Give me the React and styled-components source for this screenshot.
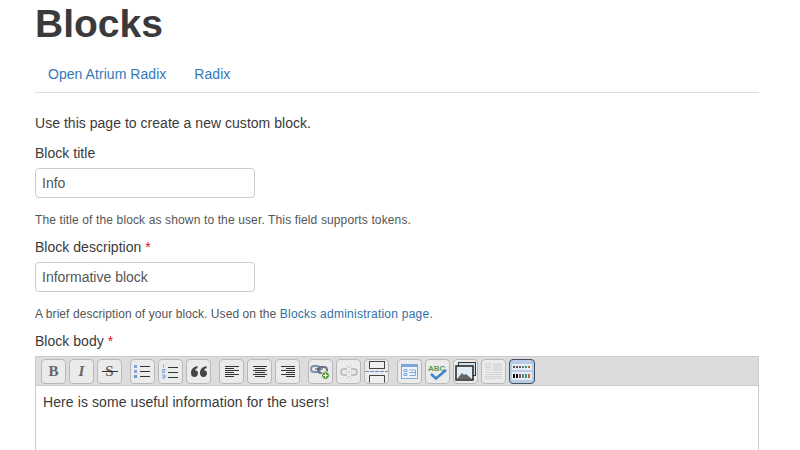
import React from 'react';
import styled, { createGlobalStyle } from 'styled-components';

const GlobalStyle = createGlobalStyle`
  html, body { margin: 0; padding: 0; height: 450px; overflow: hidden; background: #fff; }
  body { font-family: "Liberation Sans", Arial, sans-serif; font-size: 14px; color: #3a3a3a; }
`;

const Page = styled.div`
  width: 724px;
  margin-left: 35px;
  height: 450px;
  overflow: hidden;
`;

const Title = styled.h1`
  margin: 0;
  padding-top: 2px;
  font-size: 39px;
  line-height: 43px;
  font-weight: 700;
  color: #3a3a3a;
`;

const Tabs = styled.nav`
  display: flex;
  gap: 28px;
  margin-top: 7px;
  padding: 4px 13px 0;
  height: 36px;
  align-items: center;
  border-bottom: 1px solid #ddd;
  letter-spacing: 0.05px;
`;

const Link = styled.a`
  color: #337ab7;
  text-decoration: none;
`;

const HelpLink = styled(Link)`
  color: #2f6fa8;
  letter-spacing: 0.24px;
`;

const Intro = styled.p`
  margin: 0;
  padding-top: 22px;
  line-height: 16px;
  letter-spacing: 0.03px;
`;

const Field = styled.div`
  display: flex;
  flex-direction: column;
  align-items: flex-start;
`;

const Label = styled.label`
  line-height: 16px;
  margin-top: ${p => p.$top}px;
  letter-spacing: 0.03px;
`;

const Required = styled.span`
  color: #e0112b;
`;

const TextInput = styled.div`
  box-sizing: border-box;
  width: 220px;
  height: 30px;
  margin-top: 7px;
  padding: 0 6px;
  line-height: 28px;
  color: #555;
  border: 1px solid #ccc;
  border-radius: 4px;
`;

const Help = styled.div`
  margin-top: 14px;
  font-size: 12px;
  line-height: 16px;
  color: #555;
  letter-spacing: ${p => p.$spacing}px;
`;

const Editor = styled.div`
  margin-top: 7px;
  border: 1px solid #ccc;
  border-bottom: 0;
`;

const Toolbar = styled.div`
  display: flex;
  gap: 8px;
  height: 27px;
  padding: 1px 0 0 5px;
  align-items: center;
  background: #dcdcdc;
  border-bottom: 1px solid #ccc;
`;

const Group = styled.div`
  display: flex;
  gap: 3px;
`;

const Button = styled.div`
  box-sizing: border-box;
  width: ${p => (p.$active ? 26 : 25)}px;
  height: 25px;
  display: flex;
  align-items: center;
  justify-content: center;
  border-radius: 4px;
  border: 1px solid ${p => (p.$active ? '#474e5e' : '#b8b8b8')};
  background: ${p => (p.$active ? '#b9cbe6' : '#ebebeb')};
`;

const Glyph = styled.span`
  position: relative;
  font-family: "Liberation Serif", serif;
  font-weight: 700;
  font-size: 15px;
  line-height: 1;
  color: #666;
  font-style: ${p => (p.$italic ? 'italic' : 'normal')};
`;

const Strike = styled.span`
  position: absolute;
  left: -3px;
  right: -4px;
  top: 7px;
  height: 1px;
  background: #333;
`;

const Body = styled.div`
  height: 66px;
  padding: 8px 7px;
  line-height: 17px;
  letter-spacing: 0.09px;
`;

const Icon = ({ children, w = 18, h = 18 }) => (
  <svg width={w} height={h} viewBox={`0 0 ${w} ${h}`}>{children}</svg>
);

const Lines = ({ rows }) => (
  <Icon w={14} h={13}>
    {rows.map(([x, len], i) => (
      <rect key={i} x={x} y={i * 2 + 1} width={len} height="1" fill="#333" />
    ))}
  </Icon>
);

const BulletList = () => (
  <Icon w={17} h={15}>
    <rect x="0" y="1" width="3" height="3" fill="#7fa6dc" />
    <rect x="0" y="6" width="3" height="3" fill="#7fa6dc" />
    <rect x="0" y="11" width="3" height="3" fill="#6f98d6" />
    <path d="M6 2.500h10M6 7.500h10M6 12.500h10" stroke="#333" />
  </Icon>
);

const NumberList = () => (
  <Icon w={17} h={16}>
    <path d="M1.500.5v3M0 5.500h3v1.500H0v1.500h3M0 11h3v1.500H1h2V14H0" stroke="#7fa6dc" fill="none" />
    <path d="M6 3.500h10M6 8.500h10M6 13.500h10" stroke="#333" />
  </Icon>
);

const Quote = () => (
  <Icon w={16} h={11}>
    <path d="M0 7C0 3.500 2 1 6.500 0v2C5 2.500 4.200 3.200 4 4.300c1.800 0 3 1.200 3 3S5.700 11 3.500 11 0 9.500 0 7zM9 7c0-3.500 2-6 6.500-7v2c-1.500.5-2.300 1.200-2.500 2.300 1.800 0 3 1.200 3 3S14.700 11 12.500 11 9 9.500 9 7z" fill="#444" />
  </Icon>
);

const LinkIcon = () => (
  <Icon w={21} h={18}>
    <rect x="1" y="3" width="9" height="6" rx="3" fill="none" stroke="#7d93b3" strokeWidth="2" />
    <rect x="8" y="4" width="9" height="6" rx="3" fill="none" stroke="#6a7484" strokeWidth="2" />
    <path d="M5 6h8" stroke="#555" />
    <circle cx="15.500" cy="12.500" r="4" fill="#5e9c3f" stroke="#e9f2e2" />
    <path d="M13.500 12.500h4M15.500 10.500v4" stroke="#fff" />
  </Icon>
);

const UnlinkIcon = () => (
  <Icon w={18} h={18}>
    <path d="M7 6H4a3 3 0 0 0 0 6h3M11 6h3a3 3 0 0 1 0 6h-3" fill="none" stroke="#c0c0c0" strokeWidth="2" />
    <path d="M6 9h6" stroke="#c9c9c9" />
    <path d="M6 2l3 3 3-3M6 16l3-3 3 3" fill="none" stroke="#cdd6e6" />
  </Icon>
);

const PageBreak = () => (
  <Icon w={23} h={22}>
    <rect x="4.500" y="0.500" width="15" height="7" fill="#f0f0f0" stroke="#444" />
    <path d="M4.500 21.500v-7h15v7" fill="#f0f0f0" stroke="#444" />
    <path d="M0 10.500h23" stroke="#6d8fc4" strokeDasharray="4 1" />
  </Icon>
);

const TemplatesIcon = () => (
  <Icon w={17} h={15}>
    <rect x="0.500" y="0.500" width="16" height="14" fill="#edf3fb" stroke="#7fa6dc" />
    <rect x="1" y="1" width="15" height="2" fill="#7fa6dc" />
    <path d="M3 5.500h3v2H3zM3 9.500h3v2H3zM8.500 6h6v5.500h-6M8.500 8.500h6" fill="none" stroke="#7fa6dc" />
  </Icon>
);

const SpellIcon = () => (
  <Icon w={21} h={18}>
    <text x="1" y="8" fontFamily="Liberation Sans" fontWeight="700" fontSize="8" fill="#5b9a4a">ABC</text>
    <path d="M4 11l5 4.500L19 7" fill="none" stroke="#3f87c9" strokeWidth="2.500" />
  </Icon>
);

const ImageIcon = () => (
  <Icon w={21} h={19}>
    <rect x="3.500" y="0.500" width="17" height="13" fill="#cfe0ee" stroke="#333" />
    <rect x="1" y="4" width="17" height="14" fill="#e4eef6" stroke="#222" strokeWidth="1.500" />
    <path d="M2 17l5-6 2 2 2-1 6 5z" fill="#666" />
  </Icon>
);

const PreviewIcon = () => (
  <Icon w={19} h={19}>
    <path d="M1 1.500h6M1 3.500h6M1 5.500h6M1 7.500h6M1 10.500h17M1 12.500h17M1 14.500h17M1 16.500h17" stroke="#d4d4d4" />
    <rect x="9" y="1" width="9" height="8" fill="#dcdcdc" />
  </Icon>
);

const blockColours = [
  ['#555', '#555', '#8a5a2a', '#4f7fc0', '#3f9a6a', '#b96a2a'],
  ['#111', '#111', '#8a5a2a', '#4f7fc0', '#3f9a6a', '#b96a2a'],
];

const ShowBlocks = () => (
  <Icon w={20} h={16}>
    <rect x="0" y="0" width="20" height="6" fill="#e6ecf5" />
    <rect x="0" y="8" width="20" height="8" fill="#e6ecf5" />
    {blockColours.map((row, r) =>
      row.map((c, i) => (
        <rect key={`${r}-${i}`} x={i * 3 + 1} y={r === 0 ? 2 : 10} width="2" height={r === 0 ? 2 : 4} fill={c} />
      ))
    )}
  </Icon>
);

const groups = [
  [
    { key: 'b', node: <Glyph>B</Glyph> },
    { key: 'i', node: <Glyph $italic>I</Glyph> },
    { key: 's', node: <Glyph>S<Strike /></Glyph> },
  ],
  [
    { key: 'ul', node: <BulletList /> },
    { key: 'ol', node: <NumberList /> },
    { key: 'quote', node: <Quote /> },
  ],
  [
    { key: 'left', node: <Lines rows={[[0, 14], [0, 9], [0, 14], [0, 9], [0, 14], [0, 9]]} /> },
    { key: 'center', node: <Lines rows={[[0, 14], [2, 10], [0, 14], [2, 10], [0, 14], [2, 10]]} /> },
    { key: 'right', node: <Lines rows={[[0, 14], [5, 9], [0, 14], [5, 9], [0, 14], [5, 9]]} /> },
  ],
  [
    { key: 'link', node: <LinkIcon /> },
    { key: 'unlink', node: <UnlinkIcon /> },
    { key: 'break', node: <PageBreak /> },
  ],
  [
    { key: 'tpl', node: <TemplatesIcon /> },
    { key: 'spell', node: <SpellIcon /> },
    { key: 'img', node: <ImageIcon /> },
    { key: 'preview', node: <PreviewIcon /> },
    { key: 'blocks', node: <ShowBlocks />, active: true },
  ],
];

export default function App() {
  return (
    <Page>
      <GlobalStyle />
      <Title>Blocks</Title>
      <Tabs>
        <Link href="#">Open Atrium Radix</Link>
        <Link href="#">Radix</Link>
      </Tabs>
      <Intro>Use this page to create a new custom block.</Intro>
      <Field>
        <Label $top={14}>Block title</Label>
        <TextInput>Info</TextInput>
        <Help $spacing={0.13}>The title of the block as shown to the user. This field supports tokens.</Help>
      </Field>
      <Field>
        <Label $top={11}>Block description <Required>*</Required></Label>
        <TextInput>Informative block</TextInput>
        <Help $spacing={0.07}>A brief description of your block. Used on the <HelpLink href="#">Blocks administration page</HelpLink>.</Help>
      </Field>
      <Label as="div" $top={11}>Block body <Required>*</Required></Label>
      <Editor>
        <Toolbar>
          {groups.map((group, i) => (
            <Group key={i}>
              {group.map(b => <Button key={b.key} $active={b.active}>{b.node}</Button>)}
            </Group>
          ))}
        </Toolbar>
        <Body>Here is some useful information for the users!</Body>
      </Editor>
    </Page>
  );
}
